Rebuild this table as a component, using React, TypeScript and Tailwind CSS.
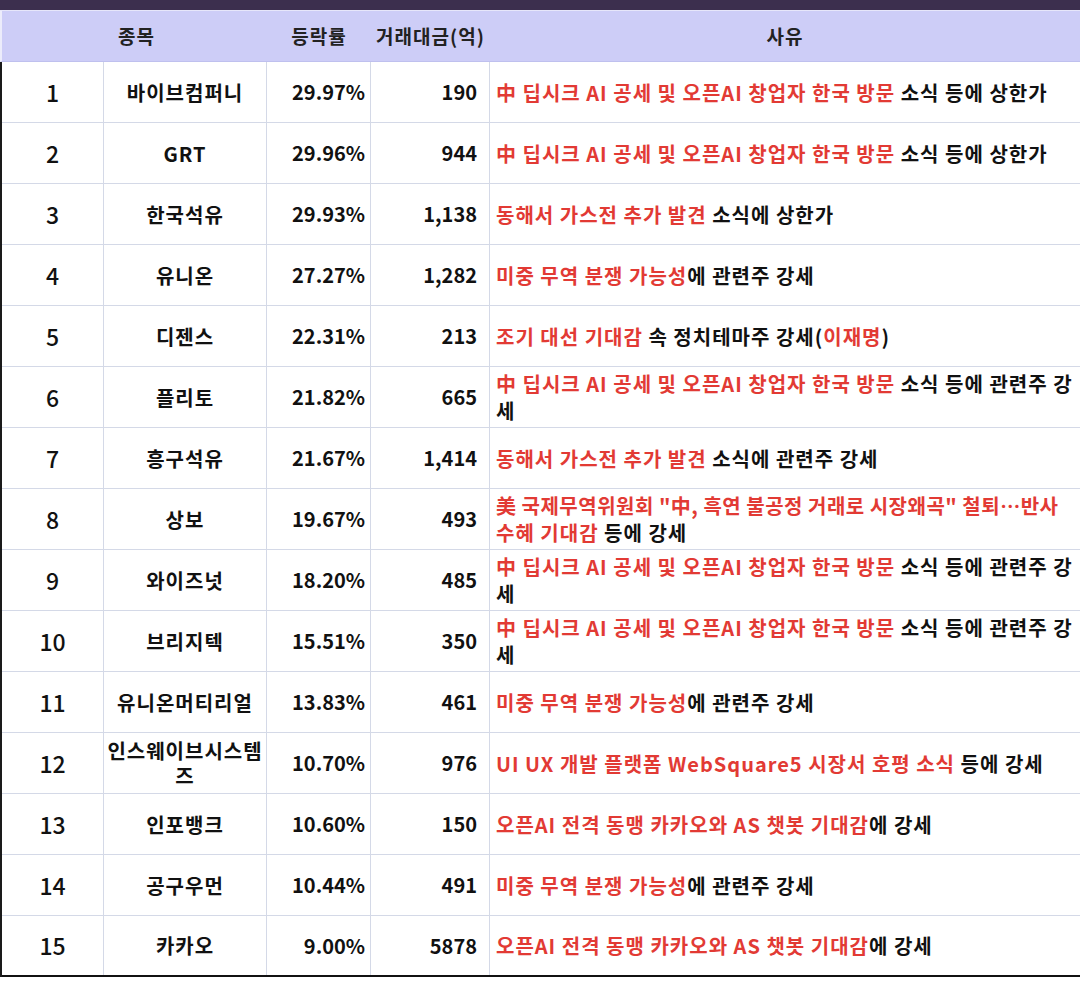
type Seg = [string, boolean];

interface Row {
  rank: number;
  name: string;
  rate: string;
  amount: string;
  lines: Seg[][];
}

const deepseek: Seg = ["中 딥시크 AI 공세 및 오픈AI 창업자 한국 방문", true];
const gas: Seg = ["동해서 가스전 추가 발견", true];
const trade: Seg = ["미중 무역 분쟁 가능성", true];
const kakao: Seg = ["오픈AI 전격 동맹 카카오와 AS 챗봇 기대감", true];

const rows: Row[] = [
  { rank: 1, name: "바이브컴퍼니", rate: "29.97%", amount: "190", lines: [[deepseek, [" 소식 등에 상한가", false]]] },
  { rank: 2, name: "GRT", rate: "29.96%", amount: "944", lines: [[deepseek, [" 소식 등에 상한가", false]]] },
  { rank: 3, name: "한국석유", rate: "29.93%", amount: "1,138", lines: [[gas, [" 소식에 상한가", false]]] },
  { rank: 4, name: "유니온", rate: "27.27%", amount: "1,282", lines: [[trade, ["에 관련주 강세", false]]] },
  {
    rank: 5,
    name: "디젠스",
    rate: "22.31%",
    amount: "213",
    lines: [[["조기 대선 기대감", true], [" 속 정치테마주 강세(", false], ["이재명", true], [")", false]]],
  },
  { rank: 6, name: "플리토", rate: "21.82%", amount: "665", lines: [[deepseek, [" 소식 등에 관련주 강", false]], [["세", false]]] },
  { rank: 7, name: "흥구석유", rate: "21.67%", amount: "1,414", lines: [[gas, [" 소식에 관련주 강세", false]]] },
  {
    rank: 8,
    name: "상보",
    rate: "19.67%",
    amount: "493",
    lines: [
      [["美 국제무역위원회 \"中, 흑연 불공정 거래로 시장왜곡\" 철퇴…반사", true]],
      [["수혜 기대감", true], [" 등에 강세", false]],
    ],
  },
  { rank: 9, name: "와이즈넛", rate: "18.20%", amount: "485", lines: [[deepseek, [" 소식 등에 관련주 강", false]], [["세", false]]] },
  { rank: 10, name: "브리지텍", rate: "15.51%", amount: "350", lines: [[deepseek, [" 소식 등에 관련주 강", false]], [["세", false]]] },
  { rank: 11, name: "유니온머티리얼", rate: "13.83%", amount: "461", lines: [[trade, ["에 관련주 강세", false]]] },
  {
    rank: 12,
    name: "인스웨이브시스템즈",
    rate: "10.70%",
    amount: "976",
    lines: [[["UI UX 개발 플랫폼 WebSquare5 시장서 호평 소식", true], [" 등에 강세", false]]],
  },
  { rank: 13, name: "인포뱅크", rate: "10.60%", amount: "150", lines: [[kakao, ["에 강세", false]]] },
  { rank: 14, name: "공구우먼", rate: "10.44%", amount: "491", lines: [[trade, ["에 관련주 강세", false]]] },
  { rank: 15, name: "카카오", rate: "9.00%", amount: "5878", lines: [[kakao, ["에 강세", false]]] },
];

const font = { fontFamily: '"Noto Sans CJK KR", "Noto Sans", sans-serif' };

export default function App() {
  return (
    <div className="w-[1080px] h-[995px] bg-white text-[#111] overflow-hidden" style={font}>
      {/* top bar */}
      <div className="h-[10px] bg-[#3c2f4e]" />
      <div className="h-px bg-[#e6e6fa]" />

      {/* header */}
      <div className="grid grid-cols-[102px_163px_104px_119px_1fr] h-[51px] bg-[#cdcdf7] border-l-2 border-[#ececfb] border-b border-b-[#bfc0ee] text-[19px] font-bold tracking-[1px] text-[#222]">
        <div className="col-span-2 flex items-center justify-center pl-[4px]">종목</div>
        <div className="flex items-center justify-center">등락률</div>
        <div className="flex items-center justify-center">거래대금(억)</div>
        <div className="flex items-center justify-center">사유</div>
      </div>

      {/* body */}
      <div className="border-l-2 border-[#1a1a1a]">
        {rows.map((r, i) => (
          <div
            key={r.rank}
            className={
              i === rows.length - 1
                ? "grid grid-cols-[102px_163px_104px_119px_1fr] h-[61px] border-b-2 border-[#111]"
                : "grid grid-cols-[102px_163px_104px_119px_1fr] h-[61px] border-b border-[#d4d9e7]"
            }
          >
            <div className="flex items-center justify-center border-r border-[#d4d9e7] text-[23px] font-medium">
              {r.rank}
            </div>
            <div className="flex items-center justify-center text-center border-r border-[#d4d9e7] text-[20px] font-bold tracking-[1px] leading-[25px]">
              {r.name}
            </div>
            <div className="flex items-center justify-end border-r border-[#d4d9e7] pr-[5px] text-[20px] font-bold">
              {r.rate}
            </div>
            <div className="flex items-center justify-end border-r border-[#d4d9e7] pr-[12px] text-[20px] font-bold">
              {r.amount}
            </div>
            <div className="flex flex-col justify-center pl-[6px] text-[20px] font-bold tracking-[1px] leading-[27px]">
              {r.lines.map((line, li) => (
                <div key={li} className={li === 0 && r.rank === 8 ? "whitespace-pre tracking-[0.5px]" : "whitespace-pre"}>
                  {line.map(([t, red], si) => (
                    <span key={si} className={red ? "text-[#e23a34]" : "text-[#111]"}>
                      {t}
                    </span>
                  ))}
                </div>
              ))}
            </div>
          </div>
        ))}
      </div>
    </div>
  );
}
